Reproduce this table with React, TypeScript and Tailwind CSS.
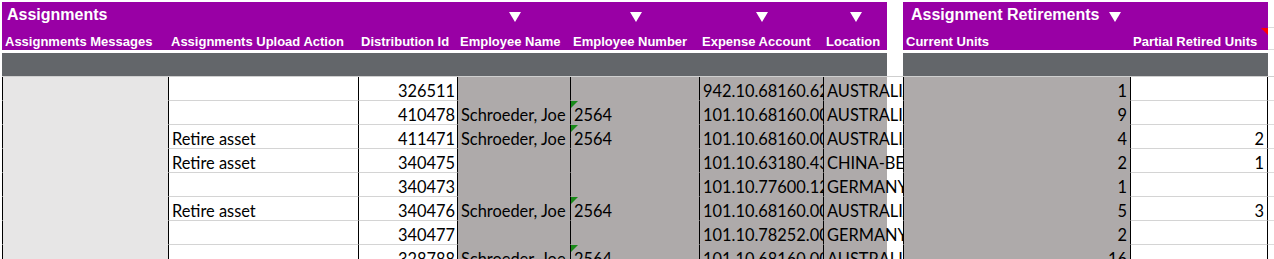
import type { ReactNode } from "react";

type Assignment = {
  action: string;
  distributionId: string;
  employeeName: string;
  employeeNumber: string;
  expenseAccount: string;
  location: string;
  currentUnits: string;
  partialUnits: string;
};

const assignments: Assignment[] = [
  { action: "", distributionId: "326511", employeeName: "", employeeNumber: "", expenseAccount: "942.10.68160.6200", location: "AUSTRALIA", currentUnits: "1", partialUnits: "" },
  { action: "", distributionId: "410478", employeeName: "Schroeder, Joe", employeeNumber: "2564", expenseAccount: "101.10.68160.0000", location: "AUSTRALIA", currentUnits: "9", partialUnits: "" },
  { action: "Retire asset", distributionId: "411471", employeeName: "Schroeder, Joe", employeeNumber: "2564", expenseAccount: "101.10.68160.0000", location: "AUSTRALIA", currentUnits: "4", partialUnits: "2" },
  { action: "Retire asset", distributionId: "340475", employeeName: "", employeeNumber: "", expenseAccount: "101.10.63180.4300", location: "CHINA-BEIJING", currentUnits: "2", partialUnits: "1" },
  { action: "", distributionId: "340473", employeeName: "", employeeNumber: "", expenseAccount: "101.10.77600.1200", location: "GERMANY", currentUnits: "1", partialUnits: "" },
  { action: "Retire asset", distributionId: "340476", employeeName: "Schroeder, Joe", employeeNumber: "2564", expenseAccount: "101.10.68160.0000", location: "AUSTRALIA", currentUnits: "5", partialUnits: "3" },
  { action: "", distributionId: "340477", employeeName: "", employeeNumber: "", expenseAccount: "101.10.78252.0000", location: "GERMANY", currentUnits: "2", partialUnits: "" },
  { action: "", distributionId: "328788", employeeName: "Schroeder, Joe", employeeNumber: "2564", expenseAccount: "101.10.68160.0000", location: "AUSTRALIA", currentUnits: "16", partialUnits: "" },
];

function DownArrow() {
  return (
    <svg width="12" height="10" viewBox="0 0 12 10" className="block">
      <polygon points="0,0 12,0 6,10" fill="#ffffff" />
    </svg>
  );
}

function ArrowCell({ className }: { className: string }) {
  return (
    <div className={`flex shrink-0 justify-center pt-[10px] ${className}`}>
      <DownArrow />
    </div>
  );
}

function Label({ className, children }: { className: string; children: ReactNode }) {
  return (
    <div className={`flex shrink-0 items-end whitespace-nowrap pb-[1px] ${className}`}>
      {children}
    </div>
  );
}

function Cell({ className, children }: { className: string; children?: ReactNode }) {
  return (
    <div className={`relative flex h-full shrink-0 items-end overflow-hidden whitespace-nowrap border-b ${className}`}>
      {children}
    </div>
  );
}

function DataRow({ row }: { row: Assignment }) {
  const hasNumber = row.employeeNumber !== "";
  return (
    <div className="flex h-[24px] font-['Lato',sans-serif] text-[16.4px] leading-[19px] text-black">
      <div className="w-[2px] shrink-0" />
      <Cell className="w-[167px] border-x border-x-black border-b-[#e7e6e6] bg-[#e7e6e6]" />
      <Cell className="w-[190px] border-r border-r-black border-b-[#d4d4d4] bg-white pl-[3px]">
        {row.action}
      </Cell>
      <Cell className="w-[99px] justify-end border-r border-r-black border-b-[#d4d4d4] bg-white pr-[2px]">
        {row.distributionId}
      </Cell>
      <Cell className="w-[113px] border-r border-r-black border-b-[#aeaaaa] bg-[#aeaaaa] pl-[3px]">
        {row.employeeName}
      </Cell>
      <Cell className="w-[129px] border-r border-r-black border-b-[#aeaaaa] bg-[#aeaaaa] pl-[3px]">
        {hasNumber && (
          <svg width="7" height="7" viewBox="0 0 7 7" className="absolute left-0 top-0">
            <polygon points="0,0 7,0 0,7" fill="#1a8a1a" />
          </svg>
        )}
        {row.employeeNumber}
      </Cell>
      <Cell className="w-[124px] border-r border-r-black border-b-[#aeaaaa] bg-[#aeaaaa] pl-[3px]">
        {row.expenseAccount}
      </Cell>
      <Cell className="w-[79px] border-b-transparent bg-[linear-gradient(to_right,#aeaaaa_63px,#ffffff_63px)] pl-[3px]">
        {row.location}
      </Cell>
      <Cell className="w-[228px] justify-end border-x border-x-black border-b-[#aeaaaa] bg-[#aeaaaa] pr-[3px]">
        {row.currentUnits}
      </Cell>
      <Cell className="w-[137px] justify-end border-r border-r-black border-b-[#d4d4d4] bg-white pr-[3px]">
        {row.partialUnits}
      </Cell>
      <div className="h-full flex-1 border-b border-b-[#dcdcdc]" />
    </div>
  );
}

export default function App() {
  return (
    <div className="h-screen w-full overflow-hidden bg-white pt-[2px]">
      {/* Title row */}
      <div className="flex h-[26px] font-['Liberation_Sans',Arial,sans-serif] font-bold text-white">
        <div className="w-[2px] shrink-0" />
        <div className="flex w-[885px] shrink-0 bg-[#9900a5]">
          <div className="w-[456px] shrink-0 whitespace-nowrap pl-[5px] pt-[4px] text-[16px] leading-[18px]">
            Assignments
          </div>
          <ArrowCell className="w-[113px]" />
          <ArrowCell className="w-[129px]" />
          <ArrowCell className="w-[124px]" />
          <ArrowCell className="w-[63px]" />
        </div>
        <div className="w-[16px] shrink-0" />
        <div className="flex w-[365px] shrink-0 items-start gap-[9px] bg-[#9900a5] pl-[8px] pt-[4px] text-[16px] leading-[18px]">
          <span className="whitespace-nowrap">Assignment Retirements</span>
          <div className="pt-[6px]">
            <DownArrow />
          </div>
        </div>
        <div className="flex-1 border-b border-b-[#dcdcdc]" />
      </div>

      {/* Column labels */}
      <div className="flex h-[22px] font-['Liberation_Sans',Arial,sans-serif] text-[13px] font-bold leading-[15px] text-white">
        <div className="w-[2px] shrink-0" />
        <div className="flex w-[885px] shrink-0 bg-[#9900a5]">
          <Label className="w-[167px] pl-[3px]">Assignments Messages</Label>
          <Label className="w-[190px] pl-[2px]">Assignments Upload Action</Label>
          <Label className="w-[99px] pl-[2px]">Distribution Id</Label>
          <Label className="w-[113px] pl-[2px]">Employee Name</Label>
          <Label className="w-[129px] pl-[2px]">Employee Number</Label>
          <Label className="w-[124px] pl-[2px]">Expense Account</Label>
          <Label className="w-[63px] pl-[2px]">Location</Label>
        </div>
        <div className="w-[16px] shrink-0" />
        <div className="flex w-[365px] shrink-0 bg-[#9900a5]">
          <Label className="w-[228px] pl-[3px]">Current Units</Label>
          <Label className="relative w-[137px] pl-[2px]">
            Partial Retired Units
            <svg width="7" height="7" viewBox="0 0 7 7" className="absolute right-0 top-0">
              <polygon points="0,0 7,0 7,7" fill="#ff0000" />
            </svg>
          </Label>
        </div>
        <div className="flex-1 border-b border-b-[#dcdcdc]" />
      </div>

      <div className="h-[3px]" />

      {/* Filter band */}
      <div className="flex h-[23px]">
        <div className="w-[2px] shrink-0" />
        <div className="w-[885px] shrink-0 bg-[#63666a]" />
        <div className="w-[16px] shrink-0" />
        <div className="w-[365px] shrink-0 bg-[#63666a]" />
        <div className="flex-1" />
      </div>
      <div className="ml-[2px] h-[1px] bg-[#cfcfcf]" />

      {assignments.map((row) => (
        <DataRow key={row.distributionId} row={row} />
      ))}
    </div>
  );
}
